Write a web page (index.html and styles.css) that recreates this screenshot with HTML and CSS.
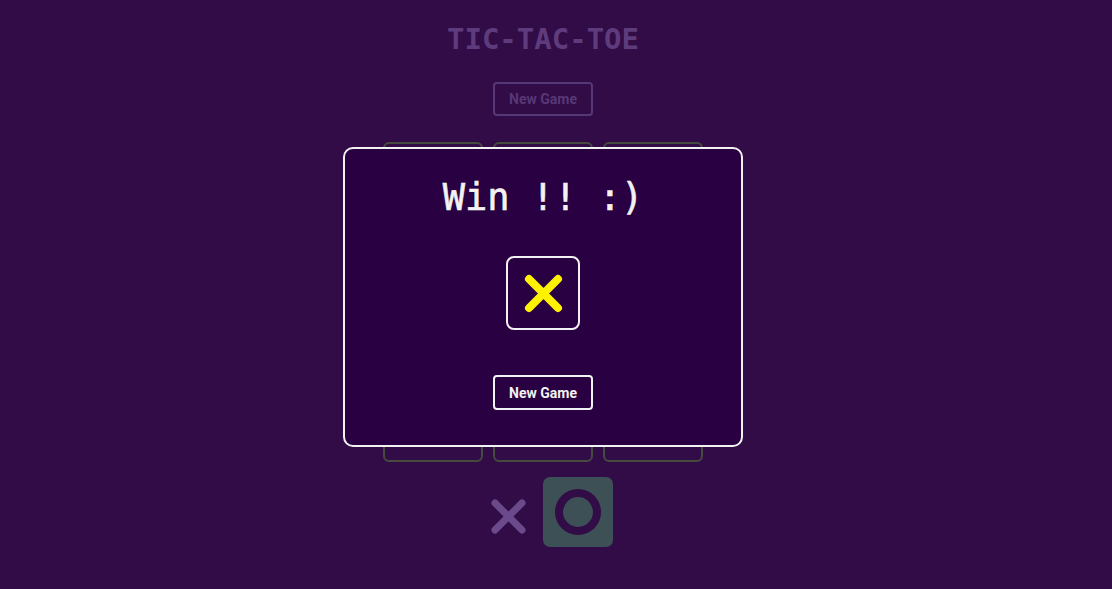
FILE: index.html
```html
<!DOCTYPE html>
<html>
<head>
<meta charset="utf-8">
<link rel="stylesheet" href="styles.css">
</head>
<body>
<main class="game">
  <h1 class="title">TIC-TAC-TOE</h1>
  <button class="btn btn-dim">New Game</button>
  <div class="board">
    <div class="cell"></div><div class="cell"></div><div class="cell"></div>
    <div class="cell"></div><div class="cell"></div><div class="cell"></div>
    <div class="cell"></div><div class="cell"></div><div class="cell"></div>
  </div>
  <div class="turns">
    <div class="turn">
      <svg width="70" height="70" viewBox="0 0 70 70"><path d="M22 26 L49 53 M49 26 L22 53" stroke="#6b4a8c" stroke-width="7" stroke-linecap="round"/></svg>
    </div>
    <div class="turn turn-active">
      <svg width="70" height="70" viewBox="0 0 70 70"><circle cx="35" cy="35" r="19" fill="none" stroke="#310c46" stroke-width="8"/></svg>
    </div>
  </div>
</main>
<div class="overlay">
  <div class="modal">
    <h2 class="modal-title">Win !! :)</h2>
    <div class="winner">
      <svg width="70" height="70" viewBox="0 0 70 70"><path d="M21 21 L50 50 M50 21 L21 50" stroke="#fff200" stroke-width="8" stroke-linecap="round"/></svg>
    </div>
    <button class="btn btn-light">New Game</button>
  </div>
</div>
</body>
</html>
```

FILE: styles.css
```css
html, body {
  margin: 0;
  padding: 0;
  background: #310c46;
  height: 100%;
}
body {
  font-family: "Roboto", "Liberation Sans", sans-serif;
}
.game {
  width: 1086px;
  display: flex;
  flex-direction: column;
  align-items: center;
}
.title {
  font-family: "DejaVu Sans Mono", monospace;
  font-weight: bold;
  font-size: 29px;
  line-height: 34px;
  color: #5e3b7d;
  margin: 22px 0 0;
}
.btn {
  width: 100px;
  height: 34px;
  background: transparent;
  border-radius: 4px;
  font-family: "Roboto", "Liberation Sans", sans-serif;
  font-weight: bold;
  font-size: 14px;
  padding: 0;
  cursor: pointer;
}
.btn-dim {
  margin-top: 26px;
  border: 2px solid #573877;
  color: #573877;
}
.board {
  margin-top: 26px;
  display: grid;
  grid-template-columns: repeat(3, 100px);
  grid-auto-rows: 100px;
  gap: 10px;
}
.cell {
  border: 2px solid #474a3e;
  border-radius: 6px;
}
.turns {
  margin-top: 15px;
  display: flex;
  gap: 0;
}
.turn {
  width: 70px;
  height: 70px;
  border-radius: 7px;
  display: flex;
  align-items: center;
  justify-content: center;
}
.turn svg { display: block; }
.turn-active {
  background: #3d5055;
}
.overlay {
  position: fixed;
  top: 0;
  left: 0;
  width: 1086px;
  height: 100%;
  display: flex;
  align-items: center;
  justify-content: center;
}
.modal {
  width: 396px;
  height: 296px;
  margin-top: 5px;
  background: #290041;
  border: 2px solid #f2f2f2;
  border-radius: 10px;
  display: flex;
  flex-direction: column;
  align-items: center;
}
.modal-title {
  font-family: "DejaVu Sans Mono", monospace;
  font-weight: normal;
  font-size: 37px;
  line-height: 42px;
  color: #f2f2f2;
  -webkit-text-stroke: 0.6px #f2f2f2;
  margin: 28px 0 0;
}
.winner {
  margin-top: 37px;
  width: 70px;
  height: 70px;
  border: 2px solid #f2f2f2;
  border-radius: 8px;
  display: flex;
  align-items: center;
  justify-content: center;
}
.winner svg { display: block; }
.btn-light {
  margin-top: 45px;
  height: 35px;
  border: 2px solid #f2f2f2;
  color: #f2f2f2;
}
```
